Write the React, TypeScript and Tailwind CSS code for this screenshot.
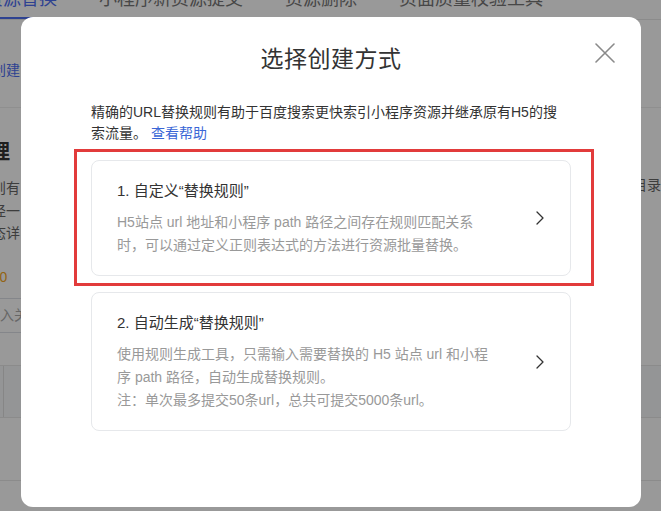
import React from "react";

function CloseIcon() {
  return (
    <svg width="20" height="20" viewBox="0 0 20 20" fill="none">
      <path d="M1 1L19 19M19 1L1 19" stroke="#8a8a8a" strokeWidth="1.6" strokeLinecap="round" />
    </svg>
  );
}

function Chevron() {
  return (
    <svg width="8" height="14" viewBox="0 0 8 14" fill="none" className="shrink-0">
      <path d="M1 1L7 7L1 13" stroke="#333" strokeWidth="1.3" strokeLinecap="round" strokeLinejoin="round" />
    </svg>
  );
}

type CardProps = {
  title: string;
  lines: string[];
};

function OptionCard({ title, lines }: CardProps) {
  return (
    <div className="flex items-center rounded-[8px] border border-[#e6e8eb] bg-white py-[18px] pl-[25px] pr-[26px]">
      <div className="flex-1 whitespace-nowrap">
        <div className="text-[15px] leading-[23px] text-[#333]">{title}</div>
        <div className="mt-[9px] text-[14px] leading-[23px] text-[#999]">
          {lines.map((l) => (
            <div key={l}>{l}</div>
          ))}
        </div>
      </div>
      <Chevron />
    </div>
  );
}

export default function App() {
  return (
    <div className="relative h-[511px] w-[661px] overflow-hidden bg-white font-['Liberation_Sans','Noto_Sans_CJK_SC',sans-serif]">
      {/* tabs */}
      <div className="-mt-[15px] flex h-[35px] border-b border-[#e8e8e8]">
        <div className="-ml-[15px] flex h-full gap-[42px] whitespace-nowrap text-[18px] leading-[28px] text-[#777]">
          <div className="h-full border-b-2 border-[#4e6ef2] text-[#4e6ef2]">资源替换</div>
          <div>小程序新资源提交</div>
          <div>资源删除</div>
          <div>页面质量校验工具</div>
        </div>
      </div>

      {/* toolbar */}
      <div className="flex h-[88px] justify-between border-b border-[#eeeeee]">
        <div className="w-[21px] overflow-hidden pt-[39px]">
          <div className="-ml-[36px] whitespace-nowrap text-[14px] leading-[22px] text-[#4e6ef2]">批量创建</div>
        </div>
        <div className="w-[20px]" />
      </div>

      {/* rule section */}
      <div className="flex h-[257px] justify-between">
        <div className="flex w-[21px] flex-col overflow-hidden whitespace-nowrap">
          <div className="-ml-[70px] pt-[30px] text-[20px] font-bold leading-[28px] text-[#333]">规则管理</div>
          <div className="mt-[11px] text-[14px] leading-[22.5px] text-[#666]">
            <div className="-ml-[50px]">替换规则有</div>
            <div className="-ml-[36px]">的路径一</div>
            <div className="-ml-[22px]">状态详</div>
          </div>
          <div className="-ml-[16px] mt-[21.5px] text-[14px] leading-[22px] text-[#f5a623]">100</div>
          <div className="-ml-[40px] mt-[9.5px] h-[35px] w-[300px] shrink-0 rounded-[4px] border border-[#dcdfe6] pl-[11px] text-[14px] leading-[33px] text-[#aaa]">
            请输入关键词
          </div>
        </div>
        <div className="w-[20px] overflow-hidden pt-[66px]">
          <div className="-ml-[8px] whitespace-nowrap text-[14px] leading-[22px] text-[#666]">目录</div>
        </div>
      </div>

      {/* table */}
      <div className="h-[52px] border-t border-[#e8e8e8] bg-[#f7f8fa]">
        <div className="ml-[3px] h-full border-l border-[#e0e0e0]" />
      </div>
      <div className="h-[64px] border-y border-[#e8e8e8]" />

      {/* dialog */}
      <div className="absolute inset-0 bg-black/40 pl-[21px] pt-[17px]">
        <div className="relative h-[490px] w-[620px] rounded-[12px] bg-white px-[70px] pt-[26px]">
          <h2 className="text-center text-[23px] leading-[32px] tracking-[0.5px] text-[#333]">选择创建方式</h2>
          <button className="absolute right-[26px] top-[26px] flex h-5 w-5 items-center justify-center">
            <CloseIcon />
          </button>

          <p className="mt-[26.5px] whitespace-nowrap text-[14px] leading-[21px] text-[#333]">
            精确的URL替换规则有助于百度搜索更快索引小程序资源并继承原有H5的搜
            <br />
            索流量。 <a className="text-[#3a66d6]">查看帮助</a>
          </p>

          <div className="relative mt-[16.5px]">
            <OptionCard
              title="1. 自定义“替换规则”"
              lines={[
                "H5站点 url 地址和小程序 path 路径之间存在规则匹配关系",
                "时，可以通过定义正则表达式的方法进行资源批量替换。",
              ]}
            />
            <div className="pointer-events-none absolute bottom-[-10px] left-[-17px] right-[-23px] top-[-11px] border-[3px] border-[#e23b3b]" />
          </div>

          <div className="mt-[16px]">
            <OptionCard
              title="2. 自动生成“替换规则”"
              lines={[
                "使用规则生成工具，只需输入需要替换的 H5 站点 url 和小程",
                "序 path 路径，自动生成替换规则。",
                "注：单次最多提交50条url，总共可提交5000条url。",
              ]}
            />
          </div>
        </div>
      </div>
    </div>
  );
}
